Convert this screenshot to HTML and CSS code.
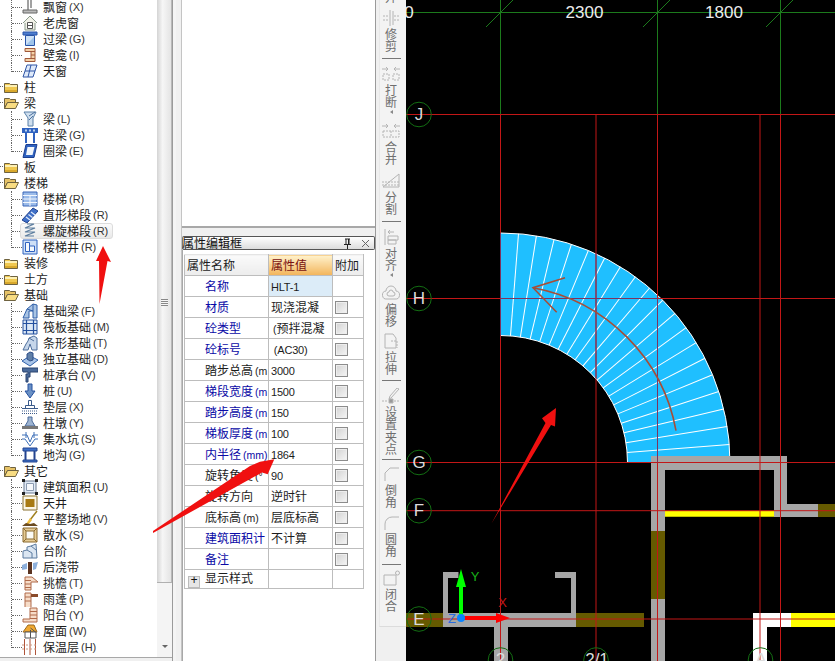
FILE: index.html
```html
<!DOCTYPE html>
<html lang="zh">
<head>
<meta charset="utf-8">
<title>属性编辑框</title>
<link rel="stylesheet" href="styles.css">
</head>
<body>
<svg class="sprites" width="0" height="0">
  <symbol id="fc" viewBox="0 0 16 16"><path d="M1.5 4.500h5l1 1h7v8h-13z" fill="#f0c850" stroke="#6e6240"/><path d="M2 6h12v2H2z" fill="#fdf0b4"/><path d="M2 11h12v2H2z" fill="#d8a82c"/></symbol>
  <symbol id="fo" viewBox="0 0 16 16"><path d="M1.500 3.500h5l1 1h5v3h-8l-3 6z" fill="#e6c266" stroke="#6e6240"/><path d="M1.500 13.500l3-6h11l-3 6z" fill="#f8dc82" stroke="#6e6240"/></symbol>
</svg>

<div class="app">
  <div class="treepanel">
    <div class="treearea">
      <div class="tree">
        <div class="row"><i class="guide"></i><span class="item"><svg class="ic" viewBox="0 0 16 16"><path d="M6 0v11M9 0v9" stroke="#444" fill="none"/><path d="M1 11h14v3H1z" fill="#bbb" stroke="#666"/></svg><span>飘窗</span><span class="key">(X)</span></span></div>
        <div class="row"><i class="guide"></i><span class="item"><svg class="ic" viewBox="0 0 16 16"><path d="M1 8l7-7 7 7M3 8v7h10V8" fill="#f2f2e8" stroke="#8a9a8a"/><path d="M5.500 7.500h5v6h-5zM5.500 10.500h5" fill="#fff" stroke="#555"/></svg><span>老虎窗</span></span></div>
        <div class="row"><i class="guide"></i><span class="item"><svg class="ic" viewBox="0 0 16 16"><path d="M1 1h14v3H1z" fill="#4f7fd0" stroke="#2a55a8"/><path d="M3.500 4.500h9v10h-9z" fill="#cfe2f6" stroke="#2a55a8"/><path d="M4 14l8-8v8z" fill="#9fc4ea"/></svg><span>过梁</span><span class="key">(G)</span></span></div>
        <div class="row"><i class="guide"></i><span class="item"><svg class="ic" viewBox="0 0 16 16"><path d="M3 1.500h10v13H3v-3h6v-7H3z" fill="#f3d2a8" stroke="#a0583a"/><path d="M9 4.500h4M9 8h4M9 11.500h4" stroke="#a0583a"/></svg><span>壁龛</span><span class="key">(I)</span></span></div>
        <div class="row last"><i class="guide"></i><span class="item"><svg class="ic" viewBox="0 0 16 16"><path d="M5 2h10l-4 12H1z" fill="#dfeafa" stroke="#2f55a5"/><path d="M3 8h10M9 2L6 14" stroke="#2f55a5"/></svg><span>天窗</span></span></div>
        <div class="row top"><i class="stub"></i><span class="item"><svg class="ic"><use href="#fc"/></svg><span>柱</span></span></div>
        <div class="row top"><i class="stub"></i><span class="item"><svg class="ic"><use href="#fo"/></svg><span>梁</span></span></div>
        <div class="row"><i class="guide"></i><span class="item"><svg class="ic" viewBox="0 0 16 16"><path d="M2 1h12l-3 6v8H6V7z" fill="#cfdfee" stroke="#5a80a8"/><path d="M7 5l6-4M7 9l4-4" stroke="#4a6f9f"/></svg><span>梁</span><span class="key">(L)</span></span></div>
        <div class="row"><i class="guide"></i><span class="item"><svg class="ic" viewBox="0 0 16 16"><path d="M0 1h16v5H0z" fill="#2f62c0"/><path d="M3 2.500h2v2H3zM7 2.500h2v2H7zM11 2.500h2v2h-2z" fill="#bcd4f2"/><path d="M3 6h2v10H3zM11 6h2v10h-2z" fill="#2f62c0"/></svg><span>连梁</span><span class="key">(G)</span></span></div>
        <div class="row last"><i class="guide"></i><span class="item"><svg class="ic" viewBox="0 0 16 16"><path d="M4 1.500h11l-3 13H1z" fill="#2f62c0" stroke="#1c3f90"/><path d="M5.500 4h7l-2 8H4z" fill="#f2f7fc"/></svg><span>圈梁</span><span class="key">(E)</span></span></div>
        <div class="row top"><i class="stub"></i><span class="item"><svg class="ic"><use href="#fc"/></svg><span>板</span></span></div>
        <div class="row top"><i class="stub"></i><span class="item"><svg class="ic"><use href="#fo"/></svg><span>楼梯</span></span></div>
        <div class="row"><i class="guide"></i><span class="item"><svg class="ic" viewBox="0 0 16 16"><path d="M1 1h14v14H1z" fill="#9cbcea" stroke="#3a66b8"/><path d="M1 4.500h14M1 8h14M1 11.500h14M8 4v11" stroke="#f2f6fc"/></svg><span>楼梯</span><span class="key">(R)</span></span></div>
        <div class="row"><i class="guide"></i><span class="item"><svg class="ic" viewBox="0 0 16 16"><path d="M0 13L11 1l5 3L5 16z" fill="#3f70c8" stroke="#24448f"/><path d="M4 10l4 3M6.500 7.500l4 3M9 5l4 3" stroke="#dfeafa" stroke-width="1.200"/></svg><span>直形梯段</span><span class="key">(R)</span></span></div>
        <div class="row sel"><i class="guide"></i><span class="item"><svg class="ic" viewBox="0 0 16 16"><path d="M5 1h7L3 5h10L3 9h10L3 13h9" fill="none" stroke="#5d7e9f" stroke-width="1.200"/></svg><span>螺旋梯段</span><span class="key">(R)</span></span></div>
        <div class="row last"><i class="guide"></i><span class="item"><svg class="ic" viewBox="0 0 16 16"><path d="M1 1h14v14H1z" fill="#cfe0f6" stroke="#2f62c0"/><path d="M3.500 3.500h4v9h-4zM7.500 7h5v5.500h-5z" fill="#f4f8fc" stroke="#2f62c0"/></svg><span>楼梯井</span><span class="key">(R)</span></span></div>
        <div class="row top"><i class="stub"></i><span class="item"><svg class="ic"><use href="#fc"/></svg><span>装修</span></span></div>
        <div class="row top"><i class="stub"></i><span class="item"><svg class="ic"><use href="#fc"/></svg><span>土方</span></span></div>
        <div class="row top"><i class="stub"></i><span class="item"><svg class="ic"><use href="#fo"/></svg><span>基础</span></span></div>
        <div class="row"><i class="guide"></i><span class="item"><svg class="ic" viewBox="0 0 16 16"><path d="M1 15l4-9 6-5 4 1v13h-4V8H7v7z" fill="#a9c4e4" stroke="#2f5fa8"/><path d="M5 6l6 2M11 1v7" stroke="#2f5fa8"/></svg><span>基础梁</span><span class="key">(F)</span></span></div>
        <div class="row"><i class="guide"></i><span class="item"><svg class="ic" viewBox="0 0 16 16"><path d="M1 1h14v14H1z" fill="#dce8f6" stroke="#24509f"/><path d="M1 4.500h14M1 11.500h14M4.500 1v14M11.500 1v14" stroke="#24509f" stroke-width="1.200"/></svg><span>筏板基础</span><span class="key">(M)</span></span></div>
        <div class="row"><i class="guide"></i><span class="item"><svg class="ic" viewBox="0 0 16 16"><path d="M1 15l3-6 2-3 1-3 5-2 3 2v12h-5l-2-6-2 6z" fill="#c6d6ea" stroke="#4e6e9c"/><path d="M7 3l5 3" stroke="#4e6e9c"/></svg><span>条形基础</span><span class="key">(T)</span></span></div>
        <div class="row"><i class="guide"></i><span class="item"><svg class="ic" viewBox="0 0 16 16"><path d="M0 10l8-5 8 4-8 6z" fill="#a8c4e8" stroke="#2f5fa8"/><path d="M5 3l3-2 3 1v7l-3 1-3-2z" fill="#5f7fa8" stroke="#2f4f88"/></svg><span>独立基础</span><span class="key">(D)</span></span></div>
        <div class="row"><i class="guide"></i><span class="item"><svg class="ic" viewBox="0 0 16 16"><path d="M0 1h16v4H8v5H6v5H4V7h2V5H1z" fill="#4a6a9a" stroke="#2a4470"/></svg><span>桩承台</span><span class="key">(V)</span></span></div>
        <div class="row"><i class="guide"></i><span class="item"><svg class="ic" viewBox="0 0 16 16"><path d="M6 1h4v7h3l-5 7-5-7h3z" fill="#6a90c4" stroke="#24509f"/></svg><span>桩</span><span class="key">(U)</span></span></div>
        <div class="row"><i class="guide"></i><span class="item"><svg class="ic" viewBox="0 0 16 16"><path d="M6.500 1.500h3v5h-3zM3.500 6.500h9v3h-9zM0 9.500h16" fill="#fff" stroke="#3a5a8a"/><path d="M0 12h16M0 14.500h16" stroke="#3a5a8a" stroke-dasharray="1 1"/></svg><span>垫层</span><span class="key">(X)</span></span></div>
        <div class="row"><i class="guide"></i><span class="item"><svg class="ic" viewBox="0 0 16 16"><path d="M6 2h4v4l3 5H3l3-5z" fill="#9db4d2" stroke="#4a6a9a"/><path d="M0 11h16v3H0z" fill="#777"/></svg><span>柱墩</span><span class="key">(Y)</span></span></div>
        <div class="row"><i class="guide"></i><span class="item"><svg class="ic" viewBox="0 0 16 16"><path d="M0 4h5l3 7 3-7h5M0 8h3l5 7 5-7h3" fill="none" stroke="#3f70b8"/><path d="M4 1v6M12 1v6" stroke="#3f70b8"/></svg><span>集水坑</span><span class="key">(S)</span></span></div>
        <div class="row last"><i class="guide"></i><span class="item"><svg class="ic" viewBox="0 0 16 16"><path d="M1 1h14v3H1zM1 13h14v2H1z" fill="#3f70c8" stroke="#24448f"/><path d="M3.500 4v9M12.500 4v9" stroke="#24448f" stroke-width="2"/></svg><span>地沟</span><span class="key">(G)</span></span></div>
        <div class="row top"><i class="stub"></i><span class="item"><svg class="ic"><use href="#fo"/></svg><span>其它</span></span></div>
        <div class="row"><i class="guide"></i><span class="item"><svg class="ic" viewBox="0 0 16 16"><path d="M2 2h12v12H2z" fill="#e2ebf6" stroke="#6a7a90"/><path d="M4.500 4.500h7v7h-7z" fill="#f6f8fb" stroke="#8a9ab0"/><path d="M0 0h3v3H0zM13 0h3v3h-3zM0 13h3v3H0zM13 13h3v3h-3z" fill="#222"/></svg><span>建筑面积</span><span class="key">(U)</span></span></div>
        <div class="row"><i class="guide"></i><span class="item"><svg class="ic" viewBox="0 0 16 16"><path d="M1 1h14v14H1z" fill="#fbf6e6" stroke="#8a7330"/><path d="M3.500 4h9v8h-9z" fill="#a87a12"/></svg><span>天井</span></span></div>
        <div class="row"><i class="guide"></i><span class="item"><svg class="ic" viewBox="0 0 16 16"><path d="M15 0L8 9" stroke="#a08020" stroke-width="1.500"/><path d="M8 7l2 2-3 4H4z" fill="#f0c040"/><path d="M0 15l4-3 4 1 4-1 4 3z" fill="#6a4a20"/></svg><span>平整场地</span><span class="key">(V)</span></span></div>
        <div class="row"><i class="guide"></i><span class="item"><svg class="ic" viewBox="0 0 16 16"><path d="M1 1h14v14H1z" fill="#e6cc96" stroke="#8a6a30"/><path d="M4 4h8v8H4z" fill="#fbfbf6" stroke="#8a6a30"/><path d="M1 1l3 3M15 1l-3 3M1 15l3-3M15 15l-3-3" stroke="#8a6a30"/></svg><span>散水</span><span class="key">(S)</span></span></div>
        <div class="row"><i class="guide"></i><span class="item"><svg class="ic" viewBox="0 0 16 16"><path d="M1 15V8l4-1V4l4-1 5-2 1 14z" fill="#dbe6f2" stroke="#5a7a9f"/><path d="M5 7l5 3v5M9 3l5 4" stroke="#5a7a9f" fill="none"/></svg><span>台阶</span></span></div>
        <div class="row"><i class="guide"></i><span class="item"><svg class="ic" viewBox="0 0 16 16"><path d="M0 6l5-2v6l-5 1zM11 4l5-1-2 7-3 1z" fill="#8db0dc"/><path d="M6 3h4v12H6z" fill="#5a3320"/></svg><span>后浇带</span></span></div>
        <div class="row"><i class="guide"></i><span class="item"><svg class="ic" viewBox="0 0 16 16"><path d="M3 2h7l6 5h-7v8H3z" fill="#f6dcc8" stroke="#b06a4a"/><path d="M3 5.500h6M3 9h6M3 12.500h6" stroke="#b06a4a"/></svg><span>挑檐</span><span class="key">(T)</span></span></div>
        <div class="row"><i class="guide"></i><span class="item"><svg class="ic" viewBox="0 0 16 16"><path d="M3 2h6v15H3z" fill="#f6dcc8" stroke="#b06a4a"/><path d="M9 3h7v3H9z" fill="#8a4a2a"/><path d="M3 6h6M3 10h6" stroke="#b06a4a"/></svg><span>雨蓬</span><span class="key">(P)</span></span></div>
        <div class="row"><i class="guide"></i><span class="item"><svg class="ic" viewBox="0 0 16 16"><path d="M8 1h7v14H1v-3h7z" fill="#f6dcc8" stroke="#b06a4a"/><path d="M8 4.500h7M8 8h7M8 11.500h7" stroke="#b06a4a"/></svg><span>阳台</span><span class="key">(Y)</span></span></div>
        <div class="row"><i class="guide"></i><span class="item"><svg class="ic" viewBox="0 0 16 16"><path d="M1 9L6 2h6l3 7z" fill="#f0a830" stroke="#9a6a20"/><path d="M3 9h11v6H3z" fill="#fff" stroke="#555"/><path d="M8.500 5l5 4M8.500 15V7" stroke="#555"/></svg><span>屋面</span><span class="key">(W)</span></span></div>
        <div class="row last"><i class="guide"></i><span class="item"><svg class="ic" viewBox="0 0 16 16"><path d="M2.500 0v16M8 0v16M13.500 0v16" stroke="#b0553a"/><path d="M0 6h16M0 10h16" stroke="#d09a80" stroke-dasharray="2 2"/></svg><span>保温层</span><span class="key">(H)</span></span></div>
      </div>
      <div class="scrollbar">
        <div class="thumb"><span class="grip"></span></div>
        <div class="track"><span class="downarrow"></span></div>
      </div>
    </div>
    <div class="treefoot"></div>
  </div>

  <div class="splitter"></div>

  <div class="mid">
    <div class="midtop"></div>
    <div class="midgap"></div>
    <div class="titlebar">
      <span class="titletext">属性编辑框</span>
      <span class="titleicons">
        <svg class="pin" viewBox="0 0 9 11"><path d="M2 1h5M3 1v5M6 1v5M1 6.500h7M4.500 7v4" stroke="#222" fill="none"/><path d="M5 1h1v5H5z" fill="#222"/></svg>
        <svg class="close" viewBox="0 0 9 9"><path d="M1 1l7 7M8 1L1 8" stroke="#666" fill="none"/></svg>
      </span>
    </div>
    <div class="midbody">
      <table class="props">
        <colgroup><col class="c1"><col class="c2"><col class="c3"></colgroup>
        <tr class="head"><th class="hname">属性名称</th><th class="hval">属性值</th><th class="hadd">附加</th></tr>
        <tr><td class="n blue">名称</td><td class="v cur"><span class="num">HLT-1</span></td><td class="a"></td></tr>
        <tr><td class="n blue">材质</td><td class="v">现浇混凝</td><td class="a"><span class="chk"></span></td></tr>
        <tr><td class="n blue">砼类型</td><td class="v"><span class="par">(</span>预拌混凝</td><td class="a"><span class="chk"></span></td></tr>
        <tr><td class="n blue">砼标号</td><td class="v"><span class="num">&nbsp;(AC30)</span></td><td class="a"><span class="chk"></span></td></tr>
        <tr><td class="n">踏步总高<span class="par">(m</span></td><td class="v"><span class="num">3000</span></td><td class="a"><span class="chk"></span></td></tr>
        <tr><td class="n blue">梯段宽度<span class="par">(m</span></td><td class="v"><span class="num">1500</span></td><td class="a"><span class="chk"></span></td></tr>
        <tr><td class="n blue">踏步高度<span class="par">(m</span></td><td class="v"><span class="num">150</span></td><td class="a"><span class="chk"></span></td></tr>
        <tr><td class="n blue">梯板厚度<span class="par">(m</span></td><td class="v"><span class="num">100</span></td><td class="a"><span class="chk"></span></td></tr>
        <tr><td class="n blue">内半径<span class="par">(mm)</span></td><td class="v"><span class="num">1864</span></td><td class="a"><span class="chk"></span></td></tr>
        <tr><td class="n">旋转角度<span class="par">(°</span></td><td class="v"><span class="num">90</span></td><td class="a"><span class="chk"></span></td></tr>
        <tr><td class="n">旋转方向</td><td class="v">逆时针</td><td class="a"><span class="chk"></span></td></tr>
        <tr><td class="n">底标高<span class="par">(m)</span></td><td class="v">层底标高</td><td class="a"><span class="chk"></span></td></tr>
        <tr><td class="n blue">建筑面积计</td><td class="v">不计算</td><td class="a"><span class="chk"></span></td></tr>
        <tr><td class="n blue">备注</td><td class="v"></td><td class="a"><span class="chk"></span></td></tr>
        <tr class="lastrow"><td class="n style"><span class="plus">+</span>显示样式</td><td class="v"></td><td class="a"></td></tr>
      </table>
    </div>
  </div>

  <div class="stripwrap">
    <div class="strip">
      <div class="tool first"><span class="ttext">并</span></div>
      <div class="tool g6"><svg class="ti" viewBox="0 0 20 16"><path d="M9 0v16M12 1v14" /><path d="M2 6h6M13 6h6M2 10h6M13 10h6" stroke-dasharray="2 1"/></svg><span class="ttext">修剪</span></div>
      <div class="sep g5"></div>
      <div class="tool g7"><svg class="ti" viewBox="0 0 20 16"><path d="M1 3h6M5 1l2 2-2 2M19 3h-6M15 1l-2 2 2 2"/><path d="M2 8h6v6H2zM12 8h6v6h-6z" stroke-dasharray="2 1"/></svg><span class="ttext">打断</span><span class="more"></span></div>
      <div class="tool g9"><svg class="ti" viewBox="0 0 20 16"><path d="M1 3h6M5 1l2 2-2 2M19 3h-6M15 1l-2 2 2 2"/><path d="M2 8h16v6H2zM10 8v6" stroke-dasharray="2 1"/></svg><span class="ttext">合并</span></div>
      <div class="tool g7"><svg class="ti" viewBox="0 0 20 16"><path d="M2 14L18 1v13z"/><path d="M1 9h18M1 12h18" stroke-dasharray="2 1"/></svg><span class="ttext">分割</span></div>
      <div class="sep g5"></div>
      <div class="tool g7"><svg class="ti" viewBox="0 0 20 16"><path d="M4 0v16M7 3h6M7 3l2-2M7 3l2 2"/><path d="M7 7h10v4H7zM7 11h8v4H7z"/></svg><span class="ttext">对齐</span><span class="more"></span></div>
      <div class="tool g8"><svg class="ti" viewBox="0 0 20 16"><path d="M6 14a4 4 0 0 1-1-8 5 5 0 0 1 10 0 4 4 0 0 1-1 8z"/><path d="M8 11a2 2 0 0 1 0-4 2 2 0 0 1 4 0 2 2 0 0 1 0 4z"/></svg><span class="ttext">偏移</span></div>
      <div class="tool g5"><svg class="ti" viewBox="0 0 20 16"><path d="M4 1h8l3 4v10H4z"/><path d="M10 8h6v7" stroke-dasharray="2 1"/></svg><span class="ttext">拉伸</span></div>
      <div class="sep g4"></div>
      <div class="tool g7"><svg class="ti" viewBox="0 0 20 16"><path d="M18 1L10 10l-2 1 1-3 7-8z"/><path d="M1 13h6M13 13h6" stroke-dasharray="2 1"/><path d="M8 11h4v4H8z" fill="#999"/></svg><span class="ttext">设置夹点</span></div>
      <div class="sep g3"></div>
      <div class="tool g6"><svg class="ti" viewBox="0 0 20 16"><path d="M4 15V7l5-5h9"/></svg><span class="ttext">倒角</span></div>
      <div class="tool g6"><svg class="ti" viewBox="0 0 20 16"><path d="M4 15V9a7 7 0 0 1 7-7h7"/></svg><span class="ttext">圆角</span></div>
      <div class="sep g6"></div>
      <div class="tool g5"><svg class="ti" viewBox="0 0 20 16"><path d="M3 5h12v10H3z"/><circle cx="16.500" cy="3" r="2"/></svg><span class="ttext">闭合</span></div>
    </div>
  </div>

  <svg class="canvas" viewBox="405 0 430 661">
    <g class="stair">
      <path class="treads" d="M499.500 233A229.500 229.500 0 0 1 729 462.500H626.500A127 127 0 0 0 499.500 335.500Z"/>
      <g class="steplines">
        <line x1="499.500" y1="335.500" x2="499.500" y2="233" transform="rotate(4.500 499.500 462.500)"/>
        <line x1="499.500" y1="335.500" x2="499.500" y2="233" transform="rotate(9 499.500 462.500)"/>
        <line x1="499.500" y1="335.500" x2="499.500" y2="233" transform="rotate(13.500 499.500 462.500)"/>
        <line x1="499.500" y1="335.500" x2="499.500" y2="233" transform="rotate(18 499.500 462.500)"/>
        <line x1="499.500" y1="335.500" x2="499.500" y2="233" transform="rotate(22.500 499.500 462.500)"/>
        <line x1="499.500" y1="335.500" x2="499.500" y2="233" transform="rotate(27 499.500 462.500)"/>
        <line x1="499.500" y1="335.500" x2="499.500" y2="233" transform="rotate(31.500 499.500 462.500)"/>
        <line x1="499.500" y1="335.500" x2="499.500" y2="233" transform="rotate(36 499.500 462.500)"/>
        <line x1="499.500" y1="335.500" x2="499.500" y2="233" transform="rotate(40.500 499.500 462.500)"/>
        <line x1="499.500" y1="335.500" x2="499.500" y2="233" transform="rotate(45 499.500 462.500)"/>
        <line x1="499.500" y1="335.500" x2="499.500" y2="233" transform="rotate(49.500 499.500 462.500)"/>
        <line x1="499.500" y1="335.500" x2="499.500" y2="233" transform="rotate(54 499.500 462.500)"/>
        <line x1="499.500" y1="335.500" x2="499.500" y2="233" transform="rotate(58.500 499.500 462.500)"/>
        <line x1="499.500" y1="335.500" x2="499.500" y2="233" transform="rotate(63 499.500 462.500)"/>
        <line x1="499.500" y1="335.500" x2="499.500" y2="233" transform="rotate(67.500 499.500 462.500)"/>
        <line x1="499.500" y1="335.500" x2="499.500" y2="233" transform="rotate(72 499.500 462.500)"/>
        <line x1="499.500" y1="335.500" x2="499.500" y2="233" transform="rotate(76.500 499.500 462.500)"/>
        <line x1="499.500" y1="335.500" x2="499.500" y2="233" transform="rotate(81 499.500 462.500)"/>
        <line x1="499.500" y1="335.500" x2="499.500" y2="233" transform="rotate(85.500 499.500 462.500)"/>
        <path d="M499.500 233A229.500 229.500 0 0 1 729 462.500M626.500 462.500A127 127 0 0 0 499.500 335.500" fill="none"/>
      </g>
    </g>

    <g class="walls">
      <path d="M650 456h14v205h-14zM773 456h13v61h-13zM650 456h136v14H650zM773 504h44v13h-44z"/>
      <path d="M442 613h133v14H507v34h-14v-34h-51zM442 572h15.500v6H447v35h-5zM554 572h21v41h-5v-35h-16z"/>
    </g>
    <path class="olive" d="M650 531h14v68h-14zM817 504h18v13h-18zM405 613h37v14h-37zM575 613h68v14h-68z"/>
    <path class="yellow" d="M664 510.700h109v6H664zM790 613h45v14h-45z"/>
    <path class="white" d="M752 613h38v14h-24v34h-14z"/>

    <g class="glines">
      <path d="M405 12.500H835M499.500 0V115M656.500 0V115M779.500 0V115"/>
      <path d="M485 27L512 0M642 27L669 0M765 27L792 0"/>
    </g>
    <path class="rlines" d="M405 114.500H835M405 298.500H835M405 462.500H835M405 510.700H835M405 619H835M499.500 115V661M595 115V661M656.500 115V661M759 115V661M779.500 115V661"/>
    <path class="rover" d="M499.500 233V335.500M595 253V378M656.500 298.500V462.500M500 298.500H657"/>

    <g class="flow">
      <path d="M675 430.700A178 178 0 0 0 532 287.700"/>
      <path d="M564 277.700L532 287.700L555.700 312.300"/>
    </g>

    <g class="axiscircles">
      <circle cx="418" cy="114.500" r="12.300"/>
      <circle cx="418" cy="298.500" r="12.300"/>
      <circle cx="418" cy="462.500" r="12.300"/>
      <circle cx="418" cy="510.700" r="12.300"/>
      <circle cx="418" cy="619" r="12.300"/>
      <circle cx="499.500" cy="660" r="12.300"/>
      <circle cx="595" cy="660" r="12.300"/>
      <circle cx="759.500" cy="660" r="12.300"/>
    </g>
    <g class="axislabels">
      <text x="418" y="120">J</text>
      <text x="418" y="304">H</text>
      <text x="418" y="468">G</text>
      <text x="418" y="516">F</text>
      <text x="418" y="625">E</text>
      <text x="499.500" y="665">2</text>
      <text x="596" y="665">2/1</text>
      <text x="760" y="665">A</text>
    </g>
    <g class="dims">
      <text x="408" y="18">0</text>
      <text x="583.500" y="18">2300</text>
      <text x="723" y="18">1800</text>
    </g>

    <g class="ucs">
      <path class="ug" d="M458 618v-31h-3l5-18 5 18h-3v31z"/>
      <path class="ur" d="M460 616h35v-3l14 5-14 5v-3h-35z"/>
      <circle class="ub" cx="460" cy="618" r="4"/>
      <text class="ty" x="474" y="581">Y</text>
      <text class="tx" x="501.500" y="607">X</text>
      <text class="tz" x="451" y="623">Z</text>
    </g>
  </svg>

  <svg class="marks" viewBox="0 0 835 661">
    <path d="M103 246L111 262L107.500 261L99.500 304L99 261L96 261Z"/>
    <path d="M274.300 459.300L260 461.700L250 466L153 531L153 533L262 472.500L267.700 474.300Z"/>
    <path d="M556 408L542 418.300L545.500 423L491.500 523.500L551 425L555 426.500Z"/>
  </svg>
</div>
</body>
</html>
```

FILE: styles.css
```css
* { box-sizing: border-box; }

html, body {
  margin: 0;
  padding: 0;
  background: #f0f0f0;
  overflow: hidden;
}

body {
  font-family: "Noto Sans CJK SC", "Liberation Sans", sans-serif;
  font-size: 12px;
  color: #1c1c1c;
}

.sprites { display: block; height: 0; }

.app {
  position: relative;
  display: flex;
  width: 835px;
  height: 661px;
  overflow: hidden;
}

/* tree panel */
.treepanel {
  flex: 0 0 172px;
  height: 661px;
  display: flex;
  flex-direction: column;
  border-right: 1px solid #9a9a9a;
  background: #fff;
}

.treearea {
  flex: 0 0 657px;
  display: flex;
  overflow: hidden;
}

.tree {
  flex: 0 0 157px;
  margin-top: -1px;
  background: #fff;
}

.treefoot {
  flex: 1;
  border-top: 1px solid #a8a8a8;
  background: #f0f0f0;
}

.row {
  display: flex;
  align-items: flex-start;
  height: 16px;
  line-height: 16px;
  white-space: nowrap;
}

.guide {
  flex: 0 0 11px;
  height: 16px;
  margin-left: 11px;
  border-left: 1px dotted #666;
}

.guide::after {
  content: "";
  display: block;
  height: 8px;
  border-bottom: 1px dotted #666;
}

.last .guide { height: 9px; }

.stub {
  flex: 0 0 3px;
  height: 8px;
  border-bottom: 1px dotted #666;
}

.item {
  display: flex;
  align-items: center;
  height: 16px;
}

.ic {
  flex: 0 0 16px;
  width: 16px;
  height: 16px;
  margin-right: 5px;
}

.sel .item {
  width: 93px;
  margin-left: -2px;
  padding-left: 1px;
  border: 1px solid #dcdcdc;
  border-radius: 3px;
  background: linear-gradient(#fbfbfb, #e9e9e9);
}

.key {
  margin-left: 2px;
  font-family: "Liberation Sans", sans-serif;
  font-size: 11px;
  color: #333;
}

.scrollbar {
  flex: 0 0 15px;
  display: flex;
  flex-direction: column;
  background: #f4f4f4;
}

.thumb {
  flex: 0 0 583px;
  display: flex;
  align-items: center;
  justify-content: center;
  border-right: 1px solid #b8b8b8;
  border-bottom: 1px solid #b0b0b0;
  background: linear-gradient(to right, #d4d4d4, #f6f6f6 40%, #e4e4e4);
}

.grip {
  display: block;
  width: 7px;
  height: 7px;
  margin-top: 22px;
  background: repeating-linear-gradient(#888 0 1px, #f6f6f6 1px 2px);
}

.track {
  flex: 1;
  display: flex;
  align-items: flex-end;
  justify-content: center;
  padding-bottom: 9px;
}

.downarrow {
  width: 0;
  height: 0;
  border-left: 3px solid transparent;
  border-right: 3px solid transparent;
  border-top: 3px solid #666;
}

.splitter {
  flex: 0 0 9px;
  background: #f0f0f0;
  border-left: 3px solid #f4f4f4;
  border-right: 1px solid #c4c4c4;
}

/* property panel */
.mid {
  flex: 0 0 194px;
  display: flex;
  flex-direction: column;
  border-right: 1px solid #9a9a9a;
}

.midtop {
  flex: 0 0 228px;
  background: #fff;
  border-bottom: 2px solid #a8a8a8;
}

.midgap { flex: 0 0 8px; }

.titlebar {
  flex: 0 0 14px;
  display: flex;
  align-items: center;
  justify-content: space-between;
  padding-right: 4px;
  border: 1px solid #555;
  border-left-color: #777;
  border-radius: 2px;
  background: linear-gradient(#ffffff, #dcdcdc);
  line-height: 12px;
  color: #111;
}

.titletext { margin-left: -1px; }

.titleicons {
  display: flex;
  align-items: center;
  gap: 9px;
}

.pin { width: 9px; height: 11px; }
.close { width: 9px; height: 9px; }

.midbody {
  flex: 1;
  padding: 4px 0 0 1px;
  background: #fff;
  border-left: 1px solid #a8a8a8;
}

.props {
  width: 179px;
  border-collapse: collapse;
  table-layout: fixed;
}

.c1 { width: 84px; }
.c2 { width: 64px; }
.c3 { width: 31px; }

.props tr { height: 21px; }
.props .lastrow { height: 19px; }

.props td, .props th {
  padding: 0;
  border: 1px solid #bdbdbd;
  overflow: hidden;
  white-space: nowrap;
  font-weight: normal;
  text-align: left;
  line-height: 14px;
}

.head th { border-top-color: #e4e4e4; }
.hname, .hadd { background: linear-gradient(#fafafa, #ececec); padding-left: 2px !important; }
.hval {
  padding-left: 2px !important;
  color: #7a1010;
  background: linear-gradient(#fff2cc, #f2b45a);
}

.n { padding-left: 20px !important; }
.blue { color: #0a0aa6; }
.v { padding-left: 2px !important; }
.cur { background: #dcecf8; }
.a { padding-left: 2px !important; }

.num {
  font-family: "Liberation Sans", sans-serif;
  font-size: 11px;
  letter-spacing: -0.2px;
}

.par {
  font-family: "Liberation Sans", sans-serif;
  font-size: 10.500px;
  margin: 0 0 0 2px;
}

.chk {
  display: block;
  width: 13px;
  height: 13px;
  border: 1px solid #8c8c8c;
  background: linear-gradient(135deg, #d2d2d2, #f6f6f6);
  box-shadow: inset 0 0 0 1px #eee;
}

.style { padding-left: 3px !important; }

.plus {
  display: inline-block;
  width: 12px;
  height: 12px;
  margin-right: 5px;
  border: 1px solid #bbb;
  background: #e6e6e6;
  font-family: "Liberation Mono", monospace;
  font-size: 12px;
  line-height: 9px;
  text-align: center;
  color: #111;
  vertical-align: -1px;
}

/* vertical toolbar */
.stripwrap {
  flex: 0 0 30px;
  padding-left: 3px;
  background: #f0f0f0;
}

.strip {
  height: 627px;
  display: flex;
  flex-direction: column;
  align-items: center;
  overflow: hidden;
  padding-right: 4px;
  background: #f3f3f3;
  border-left: 1px solid #e8e8e8;
  border-bottom: 1px solid #dcdcdc;
}

.tool {
  display: flex;
  flex-direction: column;
  align-items: center;
  flex: 0 0 auto;
}

.first { margin-top: -9px; }
.g3 { margin-top: 3px; }
.g4 { margin-top: 4px; }
.g5 { margin-top: 5px; }
.g6 { margin-top: 6px; }
.g7 { margin-top: 7px; }
.g8 { margin-top: 8px; }
.g9 { margin-top: 9px; }

.ti {
  display: block;
  width: 20px;
  height: 16px;
  margin-bottom: 2px;
  fill: none;
  stroke: #b4b4b4;
}

.ttext {
  display: block;
  width: 12px;
  font-size: 12px;
  line-height: 12.500px;
  color: #6e6e6e;
  text-align: center;
}

.more {
  display: block;
  width: 0;
  height: 0;
  margin: 1px 0 0;
  border-top: 2px solid transparent;
  border-bottom: 2px solid transparent;
  border-right: 3px solid #888;
  box-sizing: content-box;
}

.sep {
  flex: 0 0 1px;
  width: 19px;
  background: #777;
}

/* drawing canvas */
.canvas {
  flex: 0 0 430px;
  height: 661px;
  display: block;
  background: #000;
}

.treads { fill: #1fbfff; }
.steplines { stroke: #fff; stroke-width: 1; }
.walls { fill: #a6a6a6; }
.olive { fill: #655a00; }
.yellow { fill: #ffff00; }
.white { fill: #fff; }
.glines { fill: none; stroke: #1c7a1c; stroke-width: 1; }
.rlines { fill: none; stroke: #c21717; stroke-width: 1; }
.rover { fill: none; stroke: #7d3360; stroke-width: 1; }
.flow { fill: none; stroke: #a64e38; stroke-width: 1.600; }
.axiscircles { fill: none; stroke: #136e13; stroke-width: 1; }

.axislabels text {
  fill: #dcdcdc;
  font-family: "Liberation Sans", sans-serif;
  font-size: 17px;
  text-anchor: middle;
}

.dims text {
  fill: #ececec;
  font-family: "Liberation Sans", sans-serif;
  font-size: 17px;
  text-anchor: middle;
}

.ug { fill: #00ff00; }
.ur { fill: #ff0000; }
.ub { fill: #0a84ff; }

.ucs text {
  font-family: "Liberation Sans", sans-serif;
  font-size: 13px;
  text-anchor: middle;
}

.ty { fill: #18b018; }
.tx { fill: #c21717; }
.tz { fill: #2a6ae0; }

/* annotation arrows laid over the whole screenshot */
.marks {
  position: absolute;
  left: 0;
  top: 0;
  width: 835px;
  height: 661px;
  pointer-events: none;
  fill: #f01010;
}
```
